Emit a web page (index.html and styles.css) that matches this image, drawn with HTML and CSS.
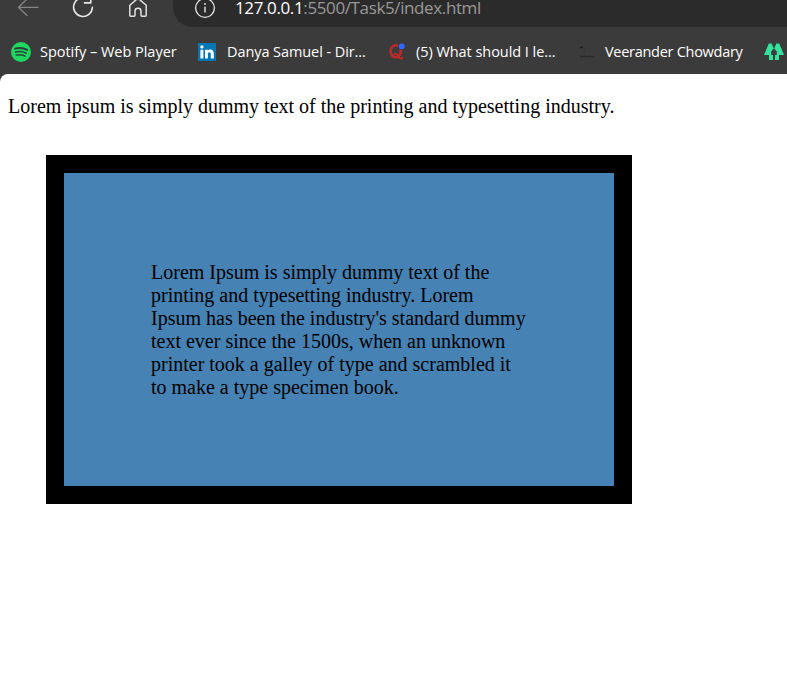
FILE: index.html
```html
<!DOCTYPE html>
<html lang="en">
<head>
<meta charset="utf-8">
<title>Task5</title>
<link rel="stylesheet" href="styles.css">
</head>
<body>
<header class="browser">
  <div class="toolbar">
    <svg class="nav" width="173" height="27" viewBox="0 0 173 27" fill="none" stroke-linecap="round" stroke-linejoin="round">
      <path d="M38 7.3H18.5M27 -1L18.5 7.3L27 15.5" stroke="#858585" stroke-width="1.3"/>
      <path d="M87.5 -1.2A9.4 9.4 0 1 0 92.4 7.3M84.5 2.9H90.8V-3" stroke="#e8e8e8" stroke-width="1.6"/>
      <path d="M129.8 5.2L138 -1.8L146.2 5.2V15.3Q146.2 16.3 145.2 16.3H142Q141 16.3 141 15.3V11Q141 8.3 138 8.3Q135 8.3 135 11V15.3Q135 16.3 134 16.3H130.8Q129.8 16.3 129.8 15.3Z" stroke="#e2e2e2" stroke-width="1.5"/>
    </svg>
    <div class="address">
      <svg class="info" width="22" height="22" viewBox="0 0 22 22" fill="none" stroke="#e8e8e8">
        <circle cx="11" cy="11" r="9.4" stroke-width="1.3"/>
        <path d="M11 9.8V15.5" stroke-width="1.4"/>
        <circle cx="11" cy="7" r=".9" fill="#e8e8e8" stroke="none"/>
      </svg>
      <span class="url"><span class="host">127.0.0.1</span>:5500/Task5/index.html</span>
    </div>
  </div>
  <nav class="bookmarks">
    <svg class="icon spotify" width="20" height="20" viewBox="0 0 20 20" fill="none" stroke="#303c34" stroke-linecap="round">
      <circle cx="10" cy="10" r="10" fill="#1ed760" stroke="none"/>
      <path d="M4 6.7Q10.5 4.9 16.2 7.8" stroke-width="1.9"/>
      <path d="M4.6 10.1Q10.2 8.6 15.2 11.1" stroke-width="1.6"/>
      <path d="M5.1 13.2Q9.8 12 14.1 14.1" stroke-width="1.3"/>
    </svg>
    <span class="label spotify-label">Spotify – Web Player</span>
    <svg class="icon linkedin" width="18" height="18" viewBox="0 0 18 18">
      <path d="M0 0H18V18H0Z" fill="#0077b5"/>
      <path d="M2.4 6.8H5.4V15.4H2.4ZM7 6.8H9.8V7.9C10.3 7.1 11.1 6.6 12.3 6.6C14.8 6.6 15.8 8.2 15.8 10.8V15.4H12.8V11.3C12.8 10 12.5 9.2 11.4 9.2C10.2 9.2 9.9 10 9.9 11.2V15.4H7Z" fill="#fff"/>
      <circle cx="3.9" cy="3.9" r="1.7" fill="#fff"/>
    </svg>
    <span class="label linkedin-label">Danya Samuel - Dir...</span>
    <svg class="icon quora" width="20" height="20" viewBox="0 0 20 20" fill="none">
      <ellipse cx="7.7" cy="9.3" rx="5.1" ry="6" stroke="#b92b27" stroke-width="2.6"/>
      <path d="M5.5 12.3Q9 10.8 10.5 14.5Q12 17.8 15.2 15.4" stroke="#b92b27" stroke-width="2"/>
      <circle cx="13.8" cy="4.3" r="3.8" fill="#3b3b3b"/>
      <circle cx="13.8" cy="4.3" r="2.9" fill="#2e69ff"/>
    </svg>
    <span class="label quora-label">(5) What should I le...</span>
    <svg class="icon sketch" width="16" height="14" viewBox="0 0 16 14" fill="none">
      <path d="M1.5 3L3.5 1.5" stroke="#151515" stroke-width="1.5"/>
      <path d="M4.5 7L7 3M10 5L12 2" stroke="#343434"/>
      <path d="M1 11.5H15" stroke="#2a2a2a" stroke-width="1.5"/>
    </svg>
    <span class="label veer-label">Veerander Chowdary</span>
    <svg class="icon trees" width="20" height="18" viewBox="0 0 20 18" fill="#35e19c">
      <path d="M4.8 .5H7.6L9.8 5.5L7.2 8.5V12H9V17H5V12H0Z"/>
      <path d="M15.2 .5H12.4L10.2 5.5L12.8 8.5V12H11V17H15V12H20Z"/>
    </svg>
  </nav>
</header>
<main class="page">
  <p class="intro">Lorem ipsum is simply dummy text of the printing and typesetting industry.</p>
  <div class="box">Lorem Ipsum is simply dummy text of the printing and typesetting industry. Lorem Ipsum has been the industry's standard dummy text ever since the 1500s, when an unknown printer took a galley of type and scrambled it to make a type specimen book.</div>
</main>
</body>
</html>
```
FILE: styles.css
```css
* { box-sizing: border-box; }
body {
  margin: 0;
  height: 674px;
  overflow: hidden;
  background: #3b3b3b;
}
.browser {
  height: 74px;
  color: #fff;
  font-family: "Open Sans", "Noto Sans", sans-serif;
}
.toolbar { display: flex; height: 27px; }
.nav { flex: none; }
.address {
  flex: 1;
  display: flex;
  height: 47px;
  margin-top: -20px;
  padding: 17px 0 0 21px;
  border-radius: 20px 0 0 20px;
  background: #2b2b2b;
}
.info { flex: none; }
.url {
  margin: 1px 0 0 19px;
  font-size: 17px;
  line-height: 20px;
  letter-spacing: -0.38px;
  color: #999;
  white-space: nowrap;
}
.host { color: #fff; }
.bookmarks {
  display: flex;
  align-items: center;
  height: 46px;
  padding: 3px 0 0 11px;
  overflow: hidden;
}
.icon { flex: none; }
.label {
  flex: none;
  font-size: 14.5px;
  line-height: 20px;
  white-space: nowrap;
}
.spotify-label { width: 158px; margin-left: 9px; letter-spacing: -0.03px; }
.linkedin-label { width: 161px; margin-left: 11px; letter-spacing: -0.08px; }
.quora-label { width: 163px; margin-left: 8px; letter-spacing: -0.05px; }
.veer-label { width: 159px; margin-left: 10px; letter-spacing: -0.28px; }
.page {
  height: 600px;
  padding: 21px 8px 0;
  border-radius: 8px 0 0 0;
  background: #fff;
  color: #000;
  font-family: "Liberation Serif", "Times New Roman", serif;
  font-size: 20px;
  line-height: 23px;
}
.intro { margin: 0 0 37px; }
.box {
  width: 586px;
  height: 349px;
  margin-left: 38px;
  padding: 88px 87px 86px;
  border: 18px solid #000;
  background: steelblue;
}
```
